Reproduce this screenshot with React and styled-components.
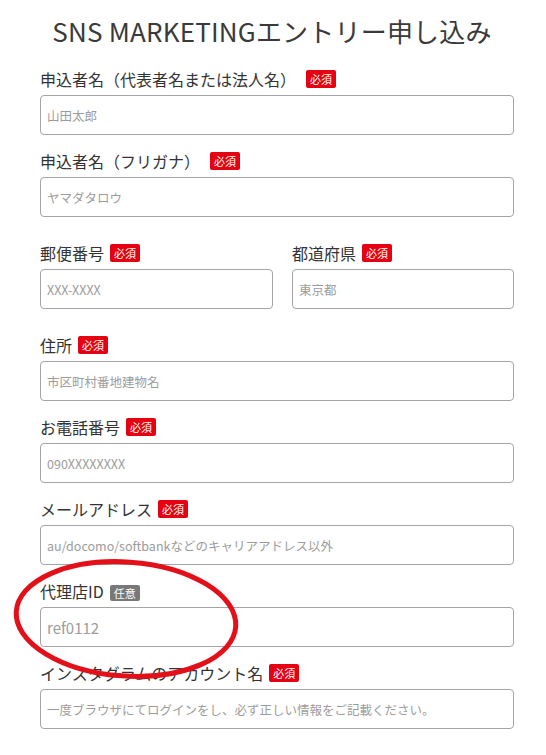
import React from 'react';
import styled, { createGlobalStyle } from 'styled-components';

const GlobalStyle = createGlobalStyle`
  body {
    margin: 0;
    background: #fff;
    font-family: "Noto Sans CJK JP", "Noto Sans", sans-serif;
    color: #333;
  }
`;

const Page = styled.div`
  position: relative;
  width: 546px;
  min-height: 755px;
  box-sizing: border-box;
  padding: 13px 32px 0 40px;
`;

const Title = styled.h1`
  margin: 0 0 22px;
  padding-right: 10px;
  font-size: 26px;
  font-weight: 400;
  line-height: 36px;
  text-align: center;
  color: #3a3a3a;
  letter-spacing: 0.2px;
`;

const Form = styled.form`
  display: flex;
  flex-direction: column;
  gap: 18px;
`;

const Field = styled.div`
  display: flex;
  flex-direction: column;
`;

const Row = styled.div`
  display: grid;
  grid-template-columns: 233px 1fr;
  column-gap: 19px;
  margin: 10px 0;
`;

const Label = styled.label`
  display: flex;
  align-items: flex-start;
  height: 24px;
  font-size: 16px;
  line-height: 16px;
  color: #333;
  white-space: nowrap;
`;

const Badge = styled.span`
  display: inline-block;
  margin-left: ${(p) => (p.$gap ? p.$gap : 6)}px;
  margin-top: ${(p) => (p.$optional ? 2 : -1)}px;
  padding: 0 4px;
  height: ${(p) => (p.$optional ? 16 : 18)}px;
  line-height: ${(p) => (p.$optional ? 16 : 18)}px;
  font-size: 11px;
  color: #fff;
  border-radius: 2px;
  background: ${(p) => (p.$optional ? '#787878' : '#e50012')};
`;

const Input = styled.input`
  display: block;
  width: 100%;
  height: 40px;
  box-sizing: border-box;
  margin: 0;
  padding: 0 6px;
  border: 1px solid #a5a5a5;
  border-radius: 4px;
  background: #fff;
  font-family: "Noto Sans CJK JP", "Noto Sans", sans-serif;
  font-size: ${(p) => (p.$large ? 15 : 12.5)}px;
  color: #333;
  outline: none;

  &::placeholder {
    color: #9c9c9c;
  }
`;

const Circle = styled.svg`
  position: absolute;
  left: 0;
  top: 0;
  width: 546px;
  height: 755px;
  pointer-events: none;
`;

const Required = ({ gap }) => <Badge $gap={gap}>必須</Badge>;

export default function App() {
  return (
    <Page>
      <GlobalStyle />
      <Title>SNS MARKETINGエントリー申し込み</Title>
      <Form onSubmit={(e) => e.preventDefault()}>
        <Field>
          <Label>
            申込者名（代表者名または法人名）
            <Required gap={10} />
          </Label>
          <Input placeholder="山田太郎" />
        </Field>
        <Field>
          <Label>
            申込者名（フリガナ）
            <Required gap={10} />
          </Label>
          <Input placeholder="ヤマダタロウ" />
        </Field>
        <Row>
          <Field>
            <Label>
              郵便番号
              <Required />
            </Label>
            <Input placeholder="XXX-XXXX" />
          </Field>
          <Field>
            <Label>
              都道府県
              <Required />
            </Label>
            <Input placeholder="東京都" />
          </Field>
        </Row>
        <Field>
          <Label>
            住所
            <Required />
          </Label>
          <Input placeholder="市区町村番地建物名" />
        </Field>
        <Field>
          <Label>
            お電話番号
            <Required />
          </Label>
          <Input placeholder="090XXXXXXXX" />
        </Field>
        <Field>
          <Label>
            メールアドレス
            <Required />
          </Label>
          <Input placeholder="au/docomo/softbankなどのキャリアアドレス以外" />
        </Field>
        <Field>
          <Label>
            代理店ID
            <Badge $optional>任意</Badge>
          </Label>
          <Input $large placeholder="ref0112" />
        </Field>
        <Field>
          <Label>
            インスタグラムのアカウント名
            <Required />
          </Label>
          <Input placeholder="一度ブラウザにてログインをし、必ず正しい情報をご記載ください。" />
        </Field>
      </Form>
      <Circle viewBox="0 0 546 755">
        <ellipse
          cx="126"
          cy="619"
          rx="110"
          ry="57"
          transform="rotate(4 126 619)"
          fill="none"
          stroke="#e3101a"
          strokeWidth="5"
        />
      </Circle>
    </Page>
  );
}
